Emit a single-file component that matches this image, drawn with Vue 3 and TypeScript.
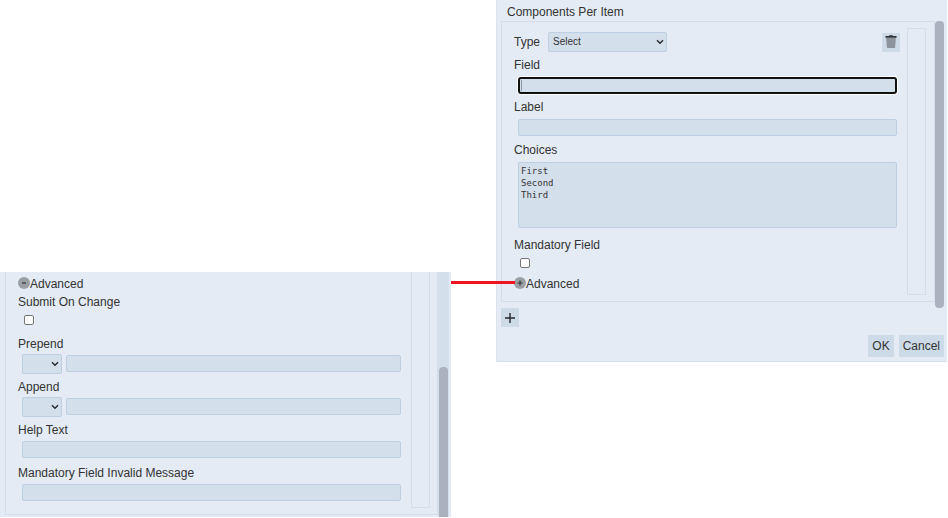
<script setup lang="ts">
import { ref } from 'vue'

interface AffixField {
  id: string
  label: string
}

const type = ref('Select')
const field = ref('')
const label = ref('')
const choices = ref('First\nSecond\nThird')
const mandatory = ref(false)
const submitOnChange = ref(false)

const affixes: AffixField[] = [
  { id: 'prepend', label: 'Prepend' },
  { id: 'append', label: 'Append' },
]
const messages: AffixField[] = [
  { id: 'help', label: 'Help Text' },
  { id: 'invalid', label: 'Mandatory Field Invalid Message' },
]
</script>

<template>
  <main class="page">
    <section class="panel advanced">
      <div class="card card-open">
        <div class="form form-advanced">
          <button class="toggle" type="button">
            <svg class="badge" viewBox="0 0 12 12" aria-hidden="true">
              <circle cx="6" cy="6" r="6" fill="#9b9fa4" />
              <path d="M4 6h4" stroke="#33373b" stroke-width="1.2" />
            </svg>
            <span>Advanced</span>
          </button>
          <div class="check-field">
            <label for="submit">Submit On Change</label>
            <input id="submit" v-model="submitOnChange" type="checkbox" />
          </div>
          <div v-for="item in affixes" :key="item.id" class="field">
            <label :for="item.id">{{ item.label }}</label>
            <div class="control">
              <span class="select-box select-small">
                <select :aria-label="item.label + ' type'"><option></option></select>
                <svg viewBox="0 0 8 6" aria-hidden="true"><path d="M1 1.3l3 3 3-3" /></svg>
              </span>
              <input :id="item.id" class="text" type="text" />
            </div>
          </div>
          <div v-for="item in messages" :key="item.id" class="field">
            <label :for="item.id">{{ item.label }}</label>
            <div class="control"><input :id="item.id" class="text" type="text" /></div>
          </div>
        </div>
        <div class="handle"></div>
      </div>
      <div class="track"><div class="thumb thumb-low"></div></div>
    </section>

    <div class="connector"></div>

    <section class="panel components">
      <h1>Components Per Item</h1>
      <div class="scroll-area">
        <div class="list">
          <div class="card">
            <div class="form">
              <div class="type-row">
                <label for="type">Type</label>
                <span class="select-box">
                  <select id="type" v-model="type"><option>Select</option></select>
                  <svg viewBox="0 0 8 6" aria-hidden="true"><path d="M1 1.3l3 3 3-3" /></svg>
                </span>
                <button class="square trash" type="button" aria-label="Delete">
                  <svg viewBox="0 0 12 14" aria-hidden="true">
                    <path d="M1.2 3h9.6l-.6 9.2q-.1.8-.9.8H2.700q-.8 0-.9-.8z" fill="#8d949d" />
                    <path d="M.5 1.100h3.300L4.500.3h3l.7.8h3.300v1.600H.5z" fill="#2f3338" />
                  </svg>
                </button>
              </div>
              <div class="field">
                <label for="field">Field</label>
                <div class="control"><input id="field" v-model="field" class="text active" type="text" /></div>
              </div>
              <div class="field">
                <label for="label">Label</label>
                <div class="control"><input id="label" v-model="label" class="text" type="text" /></div>
              </div>
              <div class="field area">
                <label for="choices">Choices</label>
                <div class="control"><textarea id="choices" v-model="choices" spellcheck="false"></textarea></div>
              </div>
              <div class="check-field">
                <label for="mandatory">Mandatory Field</label>
                <input id="mandatory" v-model="mandatory" type="checkbox" />
              </div>
              <button class="toggle" type="button">
                <svg class="badge" viewBox="0 0 12 12" aria-hidden="true">
                  <circle cx="6" cy="6" r="6" fill="#9b9fa4" />
                  <path d="M3.500 6h5M6 3.500v5" stroke="#33373b" stroke-width="1.2" />
                </svg>
                <span>Advanced</span>
              </button>
            </div>
            <div class="handle"></div>
          </div>
        </div>
        <div class="thumb"></div>
      </div>
      <button class="square" type="button" aria-label="Add component">
        <svg class="plus" viewBox="0 0 10 10" aria-hidden="true"><path d="M0 5h10M5 0v10" stroke="#25292d" stroke-width="1.4" /></svg>
      </button>
      <div class="actions">
        <button type="button">OK</button>
        <button type="button">Cancel</button>
      </div>
    </section>
  </main>
</template>

<style>
body {
  margin: 0;
  background: #fff;
}
</style>

<style scoped>
.page {
  display: grid;
  grid-template-columns: 1fr 45px 1fr;
  align-items: start;
  padding-right: 1px;
  font: 12px/18px "Liberation Sans", Arial, sans-serif;
  color: #333;
}
.page * {
  box-sizing: border-box;
}
button,
input,
select,
textarea {
  margin: 0;
  font: inherit;
  color: inherit;
}
.panel {
  background: #e4ebf4;
}
.advanced {
  display: flex;
  margin-top: 272px;
  padding: 0 2px 0 5px;
}
.components {
  border-left: 1px solid #dbe4ee;
  border-bottom: 1px solid #d6e0eb;
  padding: 3px 3px 4px 4px;
}
.connector {
  z-index: 1;
  height: 3px;
  margin: 281px -19px 0 0;
  background: #ee1420;
}
h1 {
  margin: 0 0 0 6px;
  font: inherit;
}
.scroll-area {
  display: flex;
}
.list {
  flex: 1;
  padding-bottom: 6px;
}
.card {
  display: flex;
  gap: 6px;
  padding: 6px 8px 6px 12px;
  border: 1px solid #d3deea;
}
.card-open {
  flex: 1;
  margin-bottom: 2px;
  padding-top: 0;
  padding-right: 7px;
  border-top: 0;
}
.form {
  flex: 1;
  display: flex;
  flex-direction: column;
  gap: 4px;
  padding: 4px 0 2px;
}
.form-advanced {
  gap: 5px;
  padding: 3px 0 6px;
}
.handle {
  width: 19px;
  border: 1px solid #d3deea;
}
.card-open .handle {
  border-top: 0;
}
.track {
  width: 11px;
  padding: 95px 1px 0;
  display: flex;
  background: #d3dfeb;
}
.thumb {
  width: 9px;
  border-radius: 4px;
  background: #aab2bf;
}
.thumb-low {
  border-radius: 4px 4px 0 0;
}
.type-row {
  display: flex;
  align-items: center;
  gap: 8px;
  padding-right: 1px;
}
.trash {
  margin-left: auto;
}
.field {
  display: flex;
  flex-direction: column;
  gap: 2px;
}
.form-advanced .field {
  gap: 1px;
}
.control {
  display: flex;
  align-items: center;
  gap: 4px;
  padding: 1px 4px;
}
.form-advanced .control {
  padding-top: 0;
  padding-bottom: 0;
  min-height: 19px;
}
.components .field {
  margin-bottom: -1px;
}
.components .area {
  margin: 1px 0 3px;
}
.text {
  flex: 1;
  min-width: 0;
  height: 17px;
  padding: 0 3px;
  border: 1px solid #bccfe3;
  border-radius: 2px;
  background: #d3dfeb;
  outline: 0;
}
.active {
  border: 2px solid #111;
  border-radius: 3px;
  box-shadow: 0 0 0 1px #fff;
  background: linear-gradient(#8f98a3, #8f98a3) 1px 1px / 1px 11px no-repeat #d3dfeb;
}
textarea {
  display: block;
  flex: 1;
  height: 66px;
  padding: 2px;
  border: 1px solid #bccfe3;
  border-radius: 2px;
  background: #d3dfeb;
  font: 9px/12px "DejaVu Sans Mono", monospace;
  resize: none;
  outline: 0;
}
.select-box {
  display: grid;
  width: 119px;
  height: 20px;
}
.select-box > * {
  grid-area: 1 / 1;
}
.select-box select {
  appearance: none;
  width: 100%;
  padding: 0 4px;
  border: 1px solid #bccfe3;
  border-radius: 2px;
  background: #d3dfeb;
  font-size: 10px;
}
.select-box svg {
  place-self: center end;
  width: 8px;
  height: 6px;
  margin-right: 3px;
  fill: none;
  stroke: #24282c;
  stroke-width: 1.4;
  pointer-events: none;
}
.select-small {
  width: 40px;
  height: 19px;
}
.check-field {
  display: flex;
  flex-direction: column;
  gap: 4px;
  padding-bottom: 3px;
}
.form-advanced .check-field {
  margin-top: -5px;
  padding-bottom: 5px;
}
input[type="checkbox"] {
  appearance: none;
  width: 10px;
  height: 10px;
  margin-left: 6px;
  border: 1px solid #767676;
  border-radius: 2px;
  background: #fff;
}
input[type="checkbox"]:checked {
  background: #4d6f94;
}
.toggle {
  display: flex;
  align-items: center;
  align-self: flex-start;
  padding: 0;
  border: 0;
  background: none;
}
.badge {
  width: 12px;
  height: 12px;
  margin-bottom: 2px;
}
.square {
  display: grid;
  place-items: center;
  width: 18px;
  height: 19px;
  padding: 0;
  border: 0;
  background: #cddae8;
}
.trash svg {
  width: 12px;
  height: 14px;
}
.plus {
  width: 10px;
  height: 10px;
}
.actions {
  display: flex;
  justify-content: flex-end;
  gap: 5px;
  margin-top: 8px;
}
.actions button {
  height: 22px;
  padding: 0 4px;
  border: 0;
  background: #cddae8;
}
</style>
